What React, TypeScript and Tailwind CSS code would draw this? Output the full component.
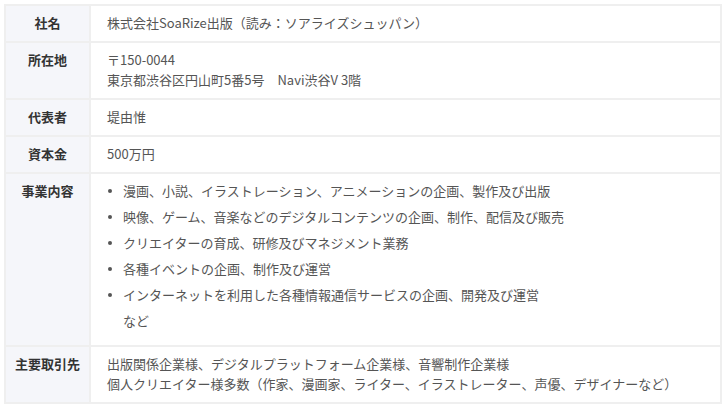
const rows: { label: string; lines?: string[]; list?: string[]; tail?: string }[] = [
  { label: "社名", lines: ["株式会社SoaRize出版（読み：ソアライズシュッパン）"] },
  { label: "所在地", lines: ["〒150-0044", "東京都渋谷区円山町5番5号　Navi渋谷V 3階"] },
  { label: "代表者", lines: ["堤由惟"] },
  { label: "資本金", lines: ["500万円"] },
  {
    label: "事業内容",
    list: [
      "漫画、小説、イラストレーション、アニメーションの企画、製作及び出版",
      "映像、ゲーム、音楽などのデジタルコンテンツの企画、制作、配信及び販売",
      "クリエイターの育成、研修及びマネジメント業務",
      "各種イベントの企画、制作及び運営",
      "インターネットを利用した各種情報通信サービスの企画、開発及び運営",
    ],
    tail: "など",
  },
  {
    label: "主要取引先",
    lines: [
      "出版関係企業様、デジタルプラットフォーム企業様、音響制作企業様",
      "個人クリエイター様多数（作家、漫画家、ライター、イラストレーター、声優、デザイナーなど）",
    ],
  },
];

export default function App() {
  return (
    <div className="w-[726px] h-[408px] bg-white pt-[4px] pl-[4px] font-['Noto_Sans_CJK_JP','Noto_Sans',sans-serif]">
      <div className="w-[718px] border-2 border-[#efefef] border-b-0">
        {rows.map((row) => (
          <div key={row.label} className="flex border-b-2 border-[#efefef]">
            <div className="w-[85px] shrink-0 bg-[#f5f6fa] border-r-2 border-[#efefef] pt-[7px] pb-2 text-center text-[13px] leading-[20px] font-bold text-[#333333]">
              {row.label}
            </div>
            <div className="flex-1 pl-4 pt-[7px] pb-2 text-[13px] leading-[20px] text-[#555555]">
              {row.lines?.map((l) => (
                <div key={l}>{l}</div>
              ))}
              {row.list && (
                <ul>
                  {row.list.map((item) => (
                    <li key={item} className="flex items-center mb-[6px]">
                      <span className="w-[4px] h-[4px] rounded-full bg-[#555555] ml-[1px] mr-[11px] shrink-0" />
                      {item}
                    </li>
                  ))}
                </ul>
              )}
              {row.tail && <div className="pl-4 mb-[6px]">{row.tail}</div>}
            </div>
          </div>
        ))}
      </div>
    </div>
  );
}
